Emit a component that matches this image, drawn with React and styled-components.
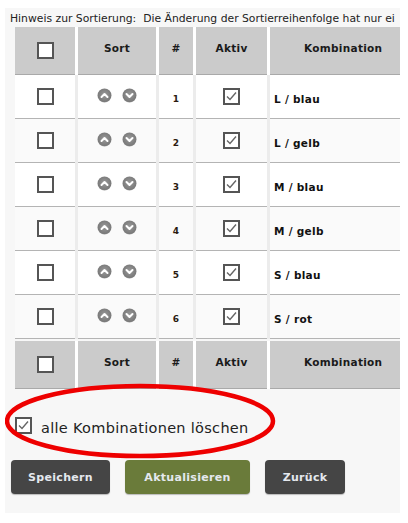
import React from "react";
import styled, { createGlobalStyle } from "styled-components";

const Global = createGlobalStyle`
  body {
    margin: 0;
    background: #fff;
    font-family: "DejaVu Sans", Verdana, sans-serif;
  }
`;

const Panel = styled.div`
  position: relative;
  margin: 8px 0 0 5px;
  width: 395px;
  height: 505px;
  background: #f7f7f7;
  overflow: hidden;
  box-sizing: border-box;
  padding-top: 2px;
`;

const Hint = styled.div`
  font-size: 10.8px;
  line-height: 17px;
  color: #222;
  white-space: nowrap;
  padding-left: 5px;
`;

const Table = styled.div`
  margin-left: 10px;
  width: 600px;
`;

const Row = styled.div`
  display: grid;
  grid-template-columns: 60px 78px 34px 71px 1fr;
  column-gap: 3px;
  height: ${p => (p.$head ? 48 : 44)}px;
  background: ${p => (p.$head ? "#fff" : "#ececec")};
  margin-top: ${p => (p.$foot ? 2 : 0)}px;
`;

const Cell = styled.div`
  display: flex;
  align-items: center;
  justify-content: ${p => (p.$left ? "flex-start" : "center")};
  padding-left: ${p => (p.$left ? 4 : 0)}px;
  background: ${p => (p.$head ? "#cbcbcb" : p.$alt ? "#fafafa" : "#fff")};
  border-bottom: 1px solid ${p => (p.$head ? "#a9a9a9" : "#b4b4b4")};
  box-sizing: border-box;
  font-weight: bold;
  color: #1a1a1a;
`;

const HeadText = styled.span`
  font-size: 10.5px;
  letter-spacing: 0.3px;
  padding-left: ${p => p.$pad || 0}px;
  margin-top: -6px;
`;

const Num = styled.span`
  font-size: 9px;
  color: #2a1a10;
  margin-top: 4px;
`;

const Combo = styled.span`
  font-size: 10.5px;
  letter-spacing: 0.3px;
  color: #111;
  margin-top: 4px;
`;

const Box = styled.span`
  display: inline-flex;
  align-items: center;
  justify-content: center;
  flex: none;
  width: 17px;
  height: 17px;
  box-sizing: border-box;
  border: 2px solid #555;
  background: #fff;
`;

const Arrows = styled.div`
  display: flex;
  gap: 10px;
  margin-top: -3px;
`;

const Options = styled.label`
  display: flex;
  align-items: center;
  gap: 9px;
  margin: 25px 0 0 10px;
  font-size: 14.5px;
  letter-spacing: 0.3px;
  color: #222;
`;

const Label = styled.span`
  margin-top: 6px;
`;

const Buttons = styled.div`
  display: flex;
  gap: 15px;
  margin: 24px 0 0 6px;
`;

const Button = styled.button`
  height: 34px;
  width: ${p => p.$w}px;
  border: none;
  border-radius: 4px;
  background: ${p => (p.$green ? "#6a7b3a" : "#454545")};
  color: #e4e8ee;
  font-family: "DejaVu Sans", Verdana, sans-serif;
  font-weight: bold;
  font-size: 11px;
  letter-spacing: 0.3px;
  box-shadow: 0 1px 1px rgba(0, 0, 0, 0.25);
`;

const Ring = styled.svg`
  position: absolute;
  left: -5px;
  top: 367px;
  pointer-events: none;
`;

function Check({ checked }) {
  return (
    <Box>
      {checked && (
        <svg width="13" height="13" viewBox="0 0 13 13">
          <path d="M2 6.5 L5 9.5 L11 2.5" fill="none" stroke="#666" strokeWidth="1.4" />
        </svg>
      )}
    </Box>
  );
}

function SortIcon({ down }) {
  return (
    <svg width="15" height="15" viewBox="0 0 15 15">
      <defs>
        <radialGradient id={down ? "gd" : "gu"} cx="50%" cy="45%" r="60%">
          <stop offset="0%" stopColor="#9a9a9a" />
          <stop offset="80%" stopColor="#7a7a7a" />
          <stop offset="100%" stopColor="#b0b0b0" />
        </radialGradient>
      </defs>
      <circle cx="7.5" cy="7.5" r="7" fill={`url(#${down ? "gd" : "gu"})`} />
      <path
        d={down ? "M4.5 6 L7.5 9 L10.5 6" : "M4.5 9 L7.5 6 L10.5 9"}
        fill="none"
        stroke="#fff"
        strokeWidth="2"
        strokeLinecap="round"
        strokeLinejoin="round"
      />
    </svg>
  );
}

function HeadRow({ foot }) {
  return (
    <Row $head $foot={foot}>
      <Cell $head><Check /></Cell>
      <Cell $head><HeadText>Sort</HeadText></Cell>
      <Cell $head><HeadText>#</HeadText></Cell>
      <Cell $head><HeadText>Aktiv</HeadText></Cell>
      <Cell $head $left><HeadText $pad={30}>Kombination</HeadText></Cell>
    </Row>
  );
}

const items = ["L / blau", "L / gelb", "M / blau", "M / gelb", "S / blau", "S / rot"];

export default function App() {
  return (
    <>
      <Global />
      <Panel>
        <Hint>Hinweis zur Sortierung:&nbsp; Die Änderung der Sortierreihenfolge hat nur ei</Hint>
        <Table>
          <HeadRow />
          {items.map((name, i) => (
            <Row key={name}>
              <Cell $alt={i % 2 === 1}><Check /></Cell>
              <Cell $alt={i % 2 === 1}>
                <Arrows>
                  <SortIcon />
                  <SortIcon down />
                </Arrows>
              </Cell>
              <Cell $alt={i % 2 === 1}><Num>{i + 1}</Num></Cell>
              <Cell $alt={i % 2 === 1}><Check checked /></Cell>
              <Cell $alt={i % 2 === 1} $left><Combo>{name}</Combo></Cell>
            </Row>
          ))}
          <HeadRow foot />
        </Table>
        <Options>
          <Check checked />
          <Label>alle Kombinationen löschen</Label>
        </Options>
        <Buttons>
          <Button $w={99}>Speichern</Button>
          <Button $w={125} $green>Aktualisieren</Button>
          <Button $w={80}>Zurück</Button>
        </Buttons>
        <Ring width="280" height="90" viewBox="0 0 280 90">
          <ellipse cx="140" cy="46" rx="133" ry="35" fill="none" stroke="#ee0000" strokeWidth="4.5" />
        </Ring>
      </Panel>
    </>
  );
}
